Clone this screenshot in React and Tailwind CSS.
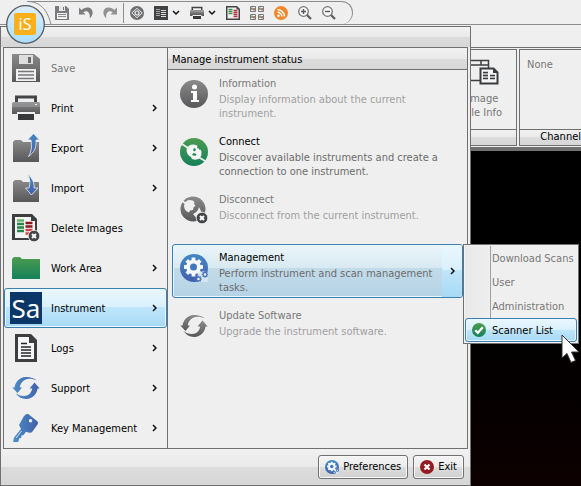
import React from "react";

function Defs() {
  return (
    <svg className="absolute size-0" aria-hidden="true">
      <defs>
        <linearGradient id="gray" x1="0" y1="0" x2="0" y2="1"><stop offset="0" stopColor="#8a8a8a" /><stop offset="1" stopColor="#58585a" /></linearGradient>
        <linearGradient id="blue" x1="0" y1="0" x2="0" y2="1"><stop offset="0" stopColor="#4287c6" /><stop offset="1" stopColor="#4460ad" /></linearGradient>
        <linearGradient id="blueDiag" x1="0" y1="0" x2="1" y2="0"><stop offset="0" stopColor="#4a8ec8" /><stop offset="1" stopColor="#435fa9" /></linearGradient>
        <linearGradient id="green" x1="0" y1="0" x2="0" y2="1"><stop offset="0" stopColor="#4d9c50" /><stop offset="1" stopColor="#15805a" /></linearGradient>
        <linearGradient id="orb" x1="0" y1="0" x2="0" y2="1"><stop offset="0" stopColor="#dcedf7" /><stop offset="0.5" stopColor="#c3e6fa" /><stop offset="1" stopColor="#a9defc" /></linearGradient>
      </defs>
    </svg>
  );
}

function Svg({ size = 28, box = 28, children }) {
  return (
    <svg width={size} height={size} viewBox={`0 0 ${box} ${box}`} className="shrink-0" aria-hidden="true">
      {children}
    </svg>
  );
}

function SaveIcon({ size }) {
  return (
    <Svg size={size}>
      <path d="M0 0h22l6 5v23H0z" fill="url(#gray)" />
      <path d="M7 1h14v9H7z" fill="#dedede" />
      <path d="M16 3h3v6h-3z" fill="#6b6b6b" />
      <path d="M4 15h20v12H4z" fill="#f0f0f0" />
      <path d="M6 17.500h16M6 21h16M6 24.500h16" stroke="#77777a" strokeWidth="1.500" />
    </Svg>
  );
}

function SmallSaveIcon() {
  return (
    <Svg size={14} box={14}>
      <path d="M0 0h11l3 3v11H0z" fill="#7b7b7d" />
      <path d="M4 0h6v5H4z" fill="#e6e6e6" />
      <path d="M8 1h1v3H8z" fill="#77777a" />
      <path d="M2 7h10v6H2z" fill="#f0f0f0" />
      <path d="M3 8.500h8M3 10.500h8" stroke="#8a8a8c" />
    </Svg>
  );
}

function PrintIcon({ size }) {
  return (
    <Svg size={size}>
      <path d="M4.500 9V3h19v6" fill="none" stroke="#444547" strokeWidth="3" />
      <path d="M0 10q0-2 2-2h24q2 0 2 2v10h-5v-2H5v2H0z" fill="url(#gray)" />
      <path d="M2 8h24q2 0 2 2v3H0v-3q0-2 2-2" fill="#a4a4a6" opacity=".5" />
      <path d="M6 20h16v6H6z" fill="#38393b" />
      <path d="M23 10.500h2" stroke="#eee" />
    </Svg>
  );
}

function FolderArrowIcon({ down }) {
  return (
    <Svg>
      <path d="M1 8l2-2h6l2 2h16v20H1z" fill="url(#gray)" />
      {down ? (
        <path d="M15.500 0c5 4 7 9 6.500 14h4l-6.500 7-6-7h3.500c1.500-5 1-9-1.500-14z" fill="url(#blue)" stroke="#f2f2f2" strokeWidth=".8" />
      ) : (
        <path d="M21.500-.500l6 6.500h-3.500c.5 8-1.500 12-7.500 16.500 3-5 3.500-10 2.500-16.500h-3.500z" fill="url(#blue)" stroke="#f2f2f2" strokeWidth=".8" />
      )}
    </Svg>
  );
}

function BadgeX() {
  return (
    <g>
      <circle cx="22" cy="22" r="5.800" fill="#454648" stroke="#efefef" strokeWidth=".8" />
      <path d="M20 20l4 4m0-4l-4 4" stroke="#fff" strokeWidth="2" />
    </g>
  );
}

function GelImageIcon() {
  return (
    <Svg>
      <path d="M0 0h20l5 5v21H0z" fill="#3d3e40" />
      <path d="M3 3h16v4h4v17H3z" fill="#f5f5f5" />
      <path d="M5 6.500h7" stroke="#62b363" strokeWidth="2.500" />
      <path d="M5 10h7M5 13.500h7M5 17h7" stroke="#278549" strokeWidth="2.500" />
      <path d="M13.500 9h7M13.500 12.500h7" stroke="#8e1820" strokeWidth="2.500" />
      <path d="M13.500 16h7M13.500 19.500h7" stroke="#d7424a" strokeWidth="2.500" />
      <BadgeX />
    </Svg>
  );
}

function SmallGelIcon() {
  return (
    <Svg size={14} box={14}>
      <path d="M0 0h11l3 3v11H0z" fill="#414244" />
      <path d="M1.500 1.500h9v2h2v9h-11z" fill="#f3f3f3" />
      <path d="M2.500 3.500h4M2.500 5.500h4M2.500 7.500h4" stroke="#3f9653" strokeWidth="1.300" />
      <path d="M7.500 4.500h4M7.500 6.500h4M7.500 8.500h4M7.500 10.500h4" stroke="#b83440" strokeWidth="1.300" />
    </Svg>
  );
}

function WorkAreaIcon() {
  return (
    <Svg><path d="M0 5l2-2h6l2 2h18v20H0z" fill="url(#green)" /></Svg>
  );
}

function LogsIcon() {
  return (
    <Svg>
      <path d="M3 0h16l6 6v22H3z" fill="#3d3e40" />
      <path d="M6 3h11v6h5v16H6z" fill="#f7f7f7" />
      <path d="M9 9.500h6M9 13h10M9 16h10M9 19h10M9 22h10" stroke="#252628" strokeWidth="1.600" />
    </Svg>
  );
}

function SyncIcon({ fill }) {
  return (
    <Svg>
      <path d="M25 6.500C22 4 18 2.800 13.500 3 7.500 3.500 3.500 7.500 2.500 13.500H.3l5.200 5.500 4.500-5.500H7.700C8.500 8.500 12.500 5 17 4.800c3 0 5.500.5 8 1.700z" fill={fill} />
      <path d="M3.500 19C6 23 10 25.200 14.500 25 20.500 24.500 24.800 20.500 25.500 14.500h2.200L22.500 8.500 17.500 14.500h2.700c-.7 4.500-3.700 7.500-8.200 7.500-3.500 0-6-1-8.500-3z" fill={fill} />
    </Svg>
  );
}

function KeyIcon() {
  return (
    <Svg>
      <path d="M14.500 0q1.500-.3 3 1l7.500 6q1.800 1.500.5 3.500l-5 7q-1.500 2-4 1l-2.500-.8-2.500 3.300-2 .5-.5 2.500-2 .5-.5 3L4 28.500H1l1-5L9 15l-2-4 5-9zM18.500 5a1.700 1.700 0 1 0 .1 0z" fill="url(#blueDiag)" fillRule="evenodd" />
      <path d="M9.500 17L4 24" stroke="#dfeaf4" strokeWidth=".9" />
    </Svg>
  );
}

function InfoIcon() {
  return (
    <Svg>
      <circle cx="14" cy="14" r="14" fill="url(#gray)" />
      <circle cx="14.500" cy="7" r="2.500" fill="#fff" />
      <path d="M11 11h6v9h2v2h-8v-2h2v-7h-2z" fill="#fff" />
    </Svg>
  );
}

function ConnectIcon() {
  return (
    <Svg>
      <circle cx="14" cy="14" r="14" fill="url(#green)" />
      <path d="M2 6l6 4M20 20l6 3.500" stroke="#efefef" strokeWidth="1.800" />
      <path d="M6.500 11.500Q8 6.500 13.500 6.500q3 0 4 1.500l-.5 2 3 1 1.500 2.500q.5 4-1.500 7-4 2-8 .5l-1-2q-4.500-2-4.500-7.500z" fill="#f3f6f3" />
      <path d="M14 10l2 1-1 2.500-2-1zM12 17l1.500-2 3 1-1 2z" fill="#218653" />
      <path d="M18.500 8l2 2.500-1.500 1" fill="none" stroke="#218653" />
    </Svg>
  );
}

function DisconnectIcon() {
  return (
    <Svg>
      <circle cx="13" cy="13" r="12.500" fill="url(#gray)" />
      <path d="M2 5l4 2.500" stroke="#efefef" strokeWidth="1.800" />
      <path d="M4 9.500Q5 4 10 4q3 0 4.500 2l-.5 2 1.500 1.500-2 2-.5 2.500-3 .5-1 2q-5-1.500-5-7zM13 18q5-2 6-7l3 6-1 4-5 .5z" fill="#efefef" />
      <BadgeX />
    </Svg>
  );
}

const TEETH = [0, 45, 90, 135, 180, 225, 270, 315];

function Gear({ cx, cy, r, hole, fill, center }) {
  return (
    <g>
      {TEETH.map((a) => (
        <rect key={a} x={cx - r * 0.2} y={cy - r} width={r * 0.4} height={r} fill={fill} transform={`rotate(${a} ${cx} ${cy})`} />
      ))}
      <circle cx={cx} cy={cy} r={r * 0.77} fill={fill} />
      <circle cx={cx} cy={cy} r={hole} fill={center} />
    </g>
  );
}

function GearIcon({ size }) {
  return (
    <Svg size={size}>
      <circle cx="14" cy="14" r="14" fill="url(#blue)" />
      <Gear cx={13.5} cy={13} r={9.5} hole={3.5} fill="#f5f9fc" center="#4377bb" />
      <circle cx="23.500" cy="23.500" r="6.200" fill="#d3e5f0" />
      <Gear cx={18.5} cy={25} r={3.2} hole={1.2} fill="#4673b8" center="#fff" />
      <Gear cx={25} cy={20.5} r={3.2} hole={1.2} fill="#4673b8" center="#fff" />
    </Svg>
  );
}

function ExitIcon() {
  return (
    <Svg size={14} box={14}>
      <circle cx="7" cy="7" r="7" fill="#921c22" />
      <path d="M4.500 4.500l5 5m0-5l-5 5" stroke="#fff" strokeWidth="2.200" />
    </Svg>
  );
}

function CheckIcon() {
  return (
    <Svg size={14} box={14}>
      <circle cx="7" cy="7" r="7" fill="url(#green)" />
      <path d="M3.300 7.200l2.500 2.600 5-5.600" fill="none" stroke="#fff" strokeWidth="2.300" />
    </Svg>
  );
}

function TurnIcon({ flip }) {
  return (
    <Svg size={14} box={14}>
      <g transform={flip ? "translate(14 0) scale(-1 1)" : undefined}>
        <path d="M0 1.500V8.500h6.500L4.300 6.200C7.500 3.800 11.500 5.500 10.800 12.500 15.500 8 14 1.500 8.500 1.500 6 1.500 4 2.500 2.600 4z" fill={flip ? "#929292" : "#7d7d7d"} />
      </g>
    </Svg>
  );
}

function DiamondIcon() {
  return (
    <Svg size={14} box={14}>
      <circle cx="7" cy="7" r="7" fill="#6f7072" />
      <path d="M1.800 7L7 2.300 12.200 7 7 11.700z" fill="none" stroke="#e4e4e4" />
      <circle cx="7" cy="7" r="2" fill="none" stroke="#f1f1f1" strokeWidth="1.200" />
    </Svg>
  );
}

function DisplayIcon() {
  return (
    <Svg size={14} box={14}>
      <path d="M0 0h14v14H0z" fill="#414244" />
      <path d="M2 3.500h4M2 5.500h4M2 7.500h4M2 9.500h4" stroke="#a7a7a7" />
      <path d="M7 4.500h5M7 6.500h5M7 8.500h5M7 10.500h5" stroke="#ddd" />
    </Svg>
  );
}

function GridIcon() {
  return (
    <Svg size={14} box={14}>
      {[[0, 0], [8, 0], [0, 8], [8, 8]].map(([x, y]) => (
        <g key={`${x}-${y}`} transform={`translate(${x} ${y})`}>
          <path d="M.5.5h5v5h-5z" fill="#f3f3f3" stroke="#77787a" />
          <path d="M2 1.500v2.500" stroke="#499756" strokeWidth="1.500" />
          <path d="M4 2v2.500" stroke="#c34850" strokeWidth="1.500" />
        </g>
      ))}
    </Svg>
  );
}

function FeedIcon() {
  return (
    <Svg size={14} box={14}>
      <circle cx="7" cy="7" r="7" fill="#f0882b" />
      <circle cx="4.500" cy="9.700" r="1.200" fill="#fff" />
      <path d="M3.500 6.300a4.300 4.300 0 0 1 4.300 4.300M3.500 3.600a7 7 0 0 1 7 7" fill="none" stroke="#fff" strokeWidth="1.400" />
    </Svg>
  );
}

function ZoomIcon({ plus }) {
  return (
    <Svg size={14} box={14}>
      <circle cx="5.500" cy="5.500" r="4.800" fill="#f6f6f6" stroke="#77787a" strokeWidth="1.300" />
      <path d="M9 9l4 4" stroke="#5d5e60" strokeWidth="2.300" />
      <path d={plus ? "M3 5.500h5M5.500 3v5" : "M3 5.500h5"} stroke="#58595b" strokeWidth="1.400" />
    </Svg>
  );
}

function DownChevron() {
  return (
    <svg width="8" height="6" viewBox="0 0 8 6" className="shrink-0" aria-hidden="true"><path d="M1 1l3 3 3-3" fill="none" stroke="#111" strokeWidth="1.500" /></svg>
  );
}

function RightChevron() {
  return (
    <svg width="5" height="8" viewBox="0 0 5 8" className="shrink-0" aria-hidden="true"><path d="M1 1l3 3-3 3" fill="none" stroke="#111" strokeWidth="1.500" /></svg>
  );
}

function InstrumentIcon() {
  return (
    <span className="-mx-0.5 flex size-8 shrink-0 items-center justify-center overflow-hidden bg-[#0a3768] font-['Noto_Sans',sans-serif] text-[26px] leading-8 text-white">Sa</span>
  );
}

function ImageInfoIcon() {
  return (
    <Svg size={32} box={32}>
      <path d="M1.500 4.500h20v20h-20zM1.500 9h20M14 4v5" fill="none" stroke="#3e3f41" strokeWidth="1.500" />
      <path d="M13.500 12.500h13l4 4v11h-17z" fill="#f5f5f5" stroke="#3b3c3e" strokeWidth="2" />
      <path d="M26 12v5h5z" fill="#3b3c3e" />
      <path d="M16 16.500h5M16 19.500h5M16 22.500h5M23 19.500h5M23 22.500h5" stroke="#3b3c3e" strokeWidth="1.500" />
      <path d="M16 18h5M16 21h5M23 21h5" stroke="#999" />
    </Svg>
  );
}

function ToolButton({ label, menu, children }) {
  return (
    <button type="button" aria-label={label} className="flex items-center gap-1">
      {children}
      {menu && <DownChevron />}
    </button>
  );
}

function QuickToolbar() {
  return (
    <header className="flex h-[25px] border-b border-[#8c8c8c] pl-[27px]">
      <svg width="25" height="24" viewBox="0 0 25 24" className="mt-px shrink-0" aria-hidden="true"><path d="M0 .5C12 .5 20 7 24 23.500" fill="none" stroke="#8c8c8c" /></svg>
      <div className="-ml-6 mt-px flex items-center gap-2.5 rounded-r-full border-t border-r border-[#8c8c8c] pr-4 pl-[27px]">
        <ToolButton label="Save"><SmallSaveIcon /></ToolButton>
        <ToolButton label="Undo"><TurnIcon /></ToolButton>
        <ToolButton label="Redo"><TurnIcon flip /></ToolButton>
        <span className="-mx-1 h-5 w-px bg-[#8c8c8c]" />
        <ToolButton label="Acquire"><DiamondIcon /></ToolButton>
        <ToolButton label="Display" menu><DisplayIcon /></ToolButton>
        <ToolButton label="Print" menu><PrintIcon size={14} /></ToolButton>
        <ToolButton label="Single image view"><SmallGelIcon /></ToolButton>
        <ToolButton label="Multiple image view"><GridIcon /></ToolButton>
        <ToolButton label="Feed"><FeedIcon /></ToolButton>
        <ToolButton label="Zoom in"><ZoomIcon plus /></ToolButton>
        <ToolButton label="Zoom out"><ZoomIcon /></ToolButton>
      </div>
    </header>
  );
}

const BAR = "bg-[linear-gradient(#f1f1f1,#e9e9e9_50%,#dcdcdc_50%,#d6d6d6)]";

function Ribbon() {
  return (
    <section className="mt-[22px] flex h-[101px] gap-0.5 border-y border-[#707070] py-px">
      <div className="flex w-[517px] shrink-0 flex-col border border-[#707070]">
        <div className="flex flex-1 justify-end pt-1.5 pr-3.5">
          <button type="button" className="flex flex-col items-center text-[#777]">
            <ImageInfoIcon />
            <span className="mt-1 leading-3.5">Image<br />File Info</span>
          </button>
        </div>
        <div className={"h-4 border-t border-[#707070] " + BAR} />
      </div>
      <div className="flex flex-1 flex-col border border-r-0 border-[#707070]">
        <div className="flex-1 px-[7px] py-2 leading-3.5 text-[#777]">None</div>
        <h2 className={"h-4 border-t border-[#707070] text-right leading-3.5 text-black " + BAR}>Channel</h2>
      </div>
    </section>
  );
}

const COMMANDS = [
  { label: "Save", icon: <SaveIcon size={28} />, disabled: true },
  { label: "Print", icon: <PrintIcon size={28} />, sub: true },
  { label: "Export", icon: <FolderArrowIcon />, sub: true },
  { label: "Import", icon: <FolderArrowIcon down />, sub: true },
  { label: "Delete Images", icon: <GelImageIcon /> },
  { label: "Work Area", icon: <WorkAreaIcon />, sub: true },
  { label: "Instrument", icon: <InstrumentIcon />, sub: true, active: true },
  { label: "Logs", icon: <LogsIcon />, sub: true },
  { label: "Support", icon: <SyncIcon fill="url(#blueDiag)" />, sub: true },
  { label: "Key Management", icon: <KeyIcon />, sub: true },
];

const ACTIONS = [
  { title: "Information", text: "Display information about the current instrument.", icon: <InfoIcon />, disabled: true },
  { title: "Connect", text: "Discover available instruments and create a connection to one instrument.", icon: <ConnectIcon /> },
  { title: "Disconnect", text: "Disconnect from the current instrument.", icon: <DisconnectIcon />, disabled: true },
  { title: "Management", text: "Perform instrument and scan management tasks.", icon: <GearIcon size={28} />, active: true },
  { title: "Update Software", text: "Upgrade the instrument software.", icon: <SyncIcon fill="url(#gray)" />, disabled: true },
];

const GLOW = "bg-[linear-gradient(#eaf7fe,#d9f0fc_48%,#bfe6fb_48%,#a7d9f5)]";
const HIGHLIGHT = "rounded-[3px] border-[#3c7fb1] shadow-[inset_0_0_0_1px_#e8f6fd] " + GLOW;
const MUTED_HIGHLIGHT = "overflow-hidden rounded-[3px] border-[#3c7fb1] bg-[linear-gradient(#ebf5fa,#d8e9f2_45%,#c3dbe9_45%,#b4d3e6)] shadow-[inset_0_0_0_1px_#e8f6fd]";

function Command({ item }) {
  return (
    <li>
      <button
        type="button"
        disabled={item.disabled}
        className={"flex h-10 w-full items-center gap-[11px] border pr-[9px] pl-[7px] text-left " + (item.active ? HIGHLIGHT : "border-transparent") + (item.disabled ? " text-[#777]" : " text-black")}
      >
        {item.icon}
        <span className="flex-1 pt-0.5 whitespace-nowrap">{item.label}</span>
        {item.sub && <RightChevron />}
      </button>
    </li>
  );
}

function Action({ item }) {
  return (
    <li>
      <button
        type="button"
        disabled={item.disabled}
        className={"flex h-[54px] w-full items-start border pl-[7px] text-left " + (item.active ? MUTED_HIGHLIGHT : "border-transparent")}
      >
        <span className="pt-[9px]">{item.icon}</span>
        <span className="flex-1 pt-1.5 pl-[11px] leading-3.5">
          <span className={"block " + (item.disabled ? "text-[#777]" : "text-black")}>{item.title}</span>
          <span className={"mt-0.5 block " + (item.disabled ? "text-[#a0a0a0]" : "text-[#6c6c6c]")}>{item.text}</span>
        </span>
        <span className={"flex w-5 items-center justify-center self-stretch " + (item.active ? GLOW : "")}>
          {item.active && <RightChevron />}
        </span>
      </button>
    </li>
  );
}

function FooterButton({ icon, children }) {
  return (
    <button type="button" className="flex h-6 items-center gap-1 rounded-[3px] border border-[#707070] bg-[linear-gradient(#f4f4f4,#ebebeb_50%,#dddddd_50%,#d0d0d0)] px-1.5 shadow-[inset_0_0_0_1px_#f8f8f8]">
      {icon}
      {children}
    </button>
  );
}

function AppMenu() {
  return (
    <div className="absolute top-[26px] left-0 border border-[#707070] bg-[#efefef]">
      <div className={"h-5 " + BAR} />
      <div className="mx-0.5 flex border border-[#707070]">
        <ul className="w-[164px] border-r border-[#707070]">
          {COMMANDS.map((c) => <Command key={c.label} item={c} />)}
        </ul>
        <section className="w-[299px]">
          <h2 className={"h-[22px] border-b border-[#707070] pl-1 leading-[23px] " + BAR}>Manage instrument status</h2>
          <ul className="flex flex-col gap-1 px-1">
            {ACTIONS.map((a) => <Action key={a.title} item={a} />)}
          </ul>
        </section>
      </div>
      <footer className={"flex h-9 items-center justify-end gap-[5px] pr-1.5 " + BAR}>
        <FooterButton icon={<GearIcon size={14} />}>Preferences</FooterButton>
        <FooterButton icon={<ExitIcon />}>Exit</FooterButton>
      </footer>
    </div>
  );
}

function SubMenu() {
  return (
    <div className="absolute top-[244px] left-[463px] w-[116px] border border-[#707070] bg-[#f1f1f1] p-px">
      <ul className="bg-linear-to-r from-[#e9e9e9] from-0% to-[#efefef] to-25% text-[#777]">
        {["Download Scans", "User", "Administration"].map((label) => (
          <li key={label} className="flex h-6 pl-[25px]">
            <button type="button" className="border-l border-[#a0a0a0] pt-0.5 pl-px whitespace-nowrap">{label}</button>
          </li>
        ))}
        <li>
          <button type="button" className={"flex h-6 w-full items-center gap-1.5 border pl-1.5 text-black " + HIGHLIGHT}>
            <CheckIcon />
            <span className="pt-0.5">Scanner List</span>
          </button>
        </li>
      </ul>
    </div>
  );
}

function AppOrb() {
  return (
    <button type="button" aria-label="Application menu" className="absolute top-1 left-1.5 size-10">
      <svg width="40" height="40" viewBox="0 0 40 40" className="absolute inset-0" aria-hidden="true">
        <circle cx="19.500" cy="20.500" r="18.800" fill="url(#orb)" stroke="#555b61" strokeWidth="1.300" />
        <rect x="8" y="9" width="22" height="22" rx="2" fill="#fbb01b" />
      </svg>
      <span className="relative block pr-0.5 text-center font-['Noto_Sans',sans-serif] text-base leading-10 text-white">iS</span>
    </button>
  );
}

function Cursor() {
  return (
    <svg width="20" height="32" viewBox="0 0 20 32" className="pointer-events-none absolute top-[334px] left-[561px]" aria-hidden="true">
      <path d="M1 1v23l5-4.500 4 9 4.500-2-4-8.500h7.500z" fill="#fff" stroke="#333" />
    </svg>
  );
}

export default function App() {
  return (
    <div className="relative flex min-h-screen flex-col overflow-hidden bg-[#efefef] font-['DejaVu_Sans_Condensed','DejaVu_Sans',sans-serif] text-[11px] text-black">
      <Defs />
      <QuickToolbar />
      <Ribbon />
      <main className="min-h-[338px] flex-1 border-t-3 border-[#707070] bg-linear-to-b from-black to-[#0d0000]" />
      <AppMenu />
      <SubMenu />
      <AppOrb />
      <Cursor />
    </div>
  );
}
